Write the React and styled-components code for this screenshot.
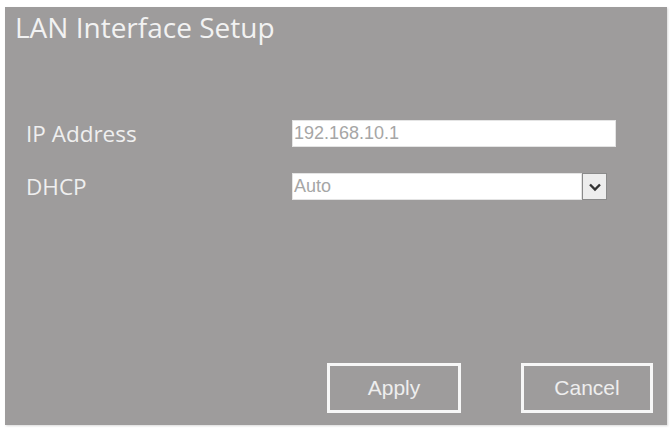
import React from "react";
import styled, { createGlobalStyle } from "styled-components";

const Global = createGlobalStyle`
  html, body { margin: 0; padding: 0; background: #ffffff; }
  body { width: 671px; height: 429px; overflow: hidden; }
`;

const Panel = styled.div`
  box-sizing: border-box;
  margin: 7px 4px 0 5px;
  width: 662px;
  height: 418px;
  background: #9e9c9c;
  box-shadow: 1px 1px 2px rgba(0,0,0,0.15);
  display: flex;
  flex-direction: column;
  padding: 3px 14px 12px 10px;
`;

const Title = styled.h1`
  margin: 0;
  font-family: "Open Sans", "Noto Sans", sans-serif;
  font-weight: 400;
  font-size: 28px;
  line-height: 34px;
  color: #f2f2f2;
`;

const Form = styled.div`
  margin-top: 76px;
  padding-left: 11px;
  display: grid;
  grid-template-columns: 266px 1fr;
  grid-auto-rows: 27px;
  row-gap: 26px;
  align-items: center;
`;

const Label = styled.label`
  font-family: "Open Sans", "Noto Sans", sans-serif;
  font-size: 22.5px;
  line-height: 27px;
  color: #efefef;
`;

const TextBox = styled.div`
  box-sizing: border-box;
  width: ${(p) => p.$w}px;
  height: 27px;
  background: #ffffff;
  border: 1px solid #e4e4e4;
  font-family: "Liberation Sans", Arial, sans-serif;
  font-size: 18px;
  line-height: 25px;
  color: #a6a6a6;
  padding-left: 1px;
`;

const SelectWrap = styled.div`
  display: flex;
  align-items: stretch;
`;

const ArrowBox = styled.div`
  box-sizing: border-box;
  width: 25px;
  height: 27px;
  background: #ededed;
  border: 1px solid #8a8a8a;
  display: flex;
  align-items: center;
  justify-content: center;
`;

const Spacer = styled.div`
  flex: 1;
`;

const Buttons = styled.div`
  display: flex;
  justify-content: flex-end;
  gap: 60px;
`;

const Button = styled.button`
  box-sizing: border-box;
  width: ${(p) => p.$w}px;
  height: 50px;
  background: transparent;
  border: 3px solid #f7f7f7;
  font-family: "Liberation Sans", Arial, sans-serif;
  font-size: 21px;
  color: #eeeeee;
  padding: 0;
`;

export default function App() {
  return (
    <>
      <Global />
      <Panel>
        <Title>LAN Interface Setup</Title>
        <Form>
          <Label>IP Address</Label>
          <TextBox $w={324}>192.168.10.1</TextBox>
          <Label>DHCP</Label>
          <SelectWrap>
            <TextBox $w={290}>Auto</TextBox>
            <ArrowBox>
              <svg width="14" height="10" viewBox="0 0 14 10">
                <path d="M2 2.5 L7 7.5 L12 2.5" fill="none" stroke="#333" strokeWidth="2.4" />
              </svg>
            </ArrowBox>
          </SelectWrap>
        </Form>
        <Spacer />
        <Buttons>
          <Button $w={134}>Apply</Button>
          <Button $w={132}>Cancel</Button>
        </Buttons>
      </Panel>
    </>
  );
}
